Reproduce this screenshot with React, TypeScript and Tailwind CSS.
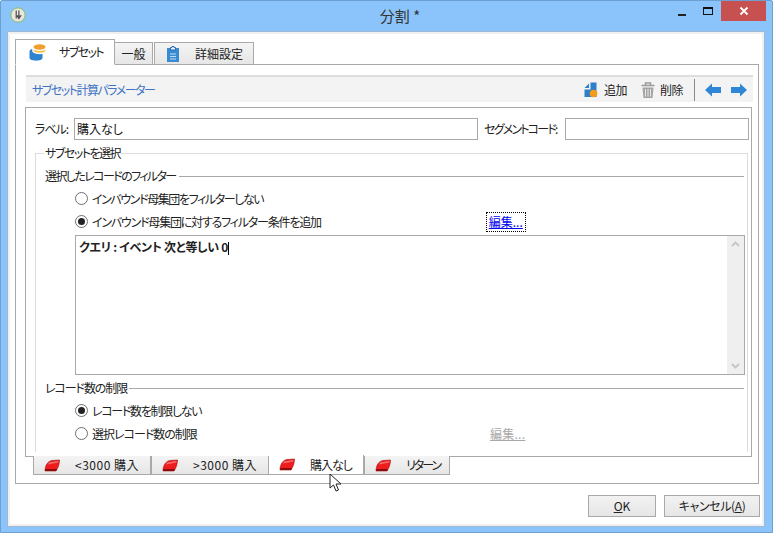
import type { ReactNode } from 'react';

const palt = "[font-feature-settings:'palt']";

function Radio({ checked, tracking, children }: { checked?: boolean; tracking: string; children: ReactNode }) {
    return (
        <div className="flex items-center gap-[4px] h-[23px]">
            <span className="w-[13px] h-[13px] rounded-full border border-[#707070] bg-white flex items-center justify-center">
                {checked && <span className="w-[7px] h-[7px] rounded-full bg-[#222]" />}
            </span>
            <span className={`${tracking} whitespace-nowrap`}>{children}</span>
        </div>
    );
}

function RedIcon() {
    return (
        <svg width="16" height="13" viewBox="0 0 16 13" className="shrink-0">
            <path d="M1 12 C1 7 3.5 2 8 1.5 L15.5 1 C15.5 5 14 9 12 12 Z" fill="#ee1c1c" stroke="#a01010" strokeWidth="0.6" />
            <path d="M1 12 L12 12 L13 10 L1.4 10 Z" fill="#8e0b0b" />
            <path d="M5 3.5 L14.5 2 L14.5 3.5 L4 5.5 Z" fill="#f76a6a" />
        </svg>
    );
}

function BottomTab({ label, active, width, tracking }: { label: string; active?: boolean; width: string; tracking: string }) {
    return (
        <div
            className={`${width} pl-[10px] flex items-center border-[#a9a9a9] border-r ${
                active
                    ? 'h-[20px] -mt-px bg-white border-b'
                    : 'h-[19px] border-l border-b bg-gradient-to-b from-[#f4f4f4] to-[#e6e6e6]'
            }`}
        >
            <RedIcon />
            <span className={`ml-[15px] whitespace-nowrap ${tracking}`}>{label}</span>
        </div>
    );
}

export default function App() {
    return (
        <div className={`w-[773px] h-[545px] bg-white text-[12px] leading-none text-[#222] overflow-hidden relative font-['Noto_Sans_CJK_JP','Noto_Sans',sans-serif] ${palt}`}>
            <div className="h-[533px] bg-[#8ac4fa] border border-[#6d9fd0] flex flex-col rounded-t-[2px]">
                {/* title bar */}
                <div className="h-[30px] flex items-start shrink-0">
                    <svg width="16" height="16" viewBox="0 0 18 18" className="ml-[9px] mt-[6px] shrink-0">
                        <circle cx="9" cy="9" r="8" fill="#e8e8e0" stroke="#8fb84a" strokeWidth="1" />
                        <path d="M7 4 L7 13 M10 4 L10 10 M8 10 L12 10 L10 13 Z" stroke="#555" strokeWidth="1.4" fill="#555" />
                    </svg>
                    <div className="flex-1 text-center text-[15px] text-[#333] pt-[7px] pl-[106px]">分割 *</div>
                    <div className="flex items-start pr-[6px]">
                        <div className="w-[27px] h-[20px] flex items-end justify-center pb-[5px]">
                            <span className="w-[8px] h-[2px] bg-[#222]" />
                        </div>
                        <div className="w-[26px] h-[20px] flex items-center justify-center">
                            <span className="w-[10px] h-[8px] border border-t-2 border-[#111]" />
                        </div>
                        <div className="w-[45px] h-[20px] bg-[#c75050] flex items-center justify-center">
                            <svg width="10" height="10" viewBox="0 0 10 10">
                                <path d="M1.5 1.5 L8.5 8.5 M8.5 1.5 L1.5 8.5" stroke="#fff" strokeWidth="1.8" />
                            </svg>
                        </div>
                    </div>
                </div>

                {/* client */}
                <div className="ml-[6px] mr-[7px] h-[496px] border border-[#9db9d6] bg-white shadow-[inset_0_0_0_2px_#f0f0f0] p-[7px_5px_0_7px] flex flex-col">
                    {/* top tabs */}
                    <div className="flex items-end h-[26px] relative z-10 -mb-px">
                        <div className="w-[100px] h-[26px] bg-white border border-[#a9a9a9] border-b-white flex items-center">
                            <svg width="17" height="17" viewBox="0 0 17 17" className="ml-[13px]">
                                <ellipse cx="10.5" cy="3" rx="6" ry="2.8" fill="#f0a030" />
                                <path d="M4.5 5 V6.5 C4.5 9.5 16.5 9.5 16.5 6.5 V5 C16.5 7.5 4.5 7.5 4.5 5 Z" fill="#f7c04a" />
                                <path d="M0.5 7.5 C0.5 6 2 5 3.2 5 V7 C3.5 9.5 9 10.5 13.5 10 V14 C13.5 17.5 0.5 17.5 0.5 14 Z" fill="#2d83d0" />
                            </svg>
                            <span className="ml-[13px] tracking-[-1.6px]">サブセット</span>
                        </div>
                        <div className="w-[38px] h-[23px] bg-gradient-to-b from-[#f4f4f4] to-[#e6e6e6] border border-l-0 border-[#a9a9a9] flex items-center justify-center">一般</div>
                        <div className="w-[100px] h-[23px] ml-px bg-gradient-to-b from-[#f4f4f4] to-[#e6e6e6] border border-[#a9a9a9] flex items-center">
                            <svg width="12" height="16" viewBox="0 0 12 16" className="ml-[12px]">
                                <rect x="0" y="2" width="12" height="14" fill="#3a8ad2" />
                                <path d="M3.5 4 V1.5 H5 V0.5 H7 V1.5 H8.5 V4 Z" fill="#e8f0f8" stroke="#2a6fb0" strokeWidth="1" />
                                <path d="M3 8 H9 M3 10.5 H9 M3 13 H9" stroke="#bcdcf5" strokeWidth="1" />
                            </svg>
                            <span className="ml-[16px]">詳細設定</span>
                        </div>
                    </div>

                    {/* frame */}
                    <div className="w-[744px] h-[420px] border border-[#a9a9a9] bg-white px-[10px] pt-[10px] flex flex-col">
                        {/* header band */}
                        <div className="h-[27px] w-[727px] bg-[#f3f3f3] border-t-2 border-[#dedede] flex items-center pl-[6px] pr-[6px] text-[#3d72c4]">
                            <span className="tracking-[-1.5px]">サブセット計算パラメーター</span>
                            <div className="ml-auto flex items-center text-[#222]">
                                <svg width="14" height="16" viewBox="0 0 14 16">
                                    <path d="M0.5 6 L5 1.5 L5 6 Z M6.5 0.5 H12.5 V15 H0.5 V7.5 H6.5 Z" fill="#2d7fc9" />
                                    <circle cx="9.5" cy="11.5" r="3.8" fill="#f59a1b" />
                                </svg>
                                <span className="ml-[6px] tracking-[-0.5px]">追加</span>
                                <svg width="14" height="16" viewBox="0 0 14 16" className="ml-[14px]">
                                    <path d="M0.5 3.5 H13.5 M4.5 3 V1 H9.5 V3" stroke="#9a9a9a" strokeWidth="1.5" fill="none" />
                                    <path d="M1.5 5.5 H12.5 L11.5 16 H2.5 Z" fill="#a4a4a4" />
                                    <path d="M4.5 7 V14.5 M7 7 V14.5 M9.5 7 V14.5" stroke="#e8e8e8" strokeWidth="1" />
                                </svg>
                                <span className="ml-[5px] tracking-[-0.5px]">削除</span>
                                <span className="w-px h-[22px] bg-[#8a8a8a] ml-[11px] mr-[10px]" />
                                <svg width="16" height="14" viewBox="0 0 16 14">
                                    <path d="M0 7 L7 0.5 V4 H16 V10 H7 V13.5 Z" fill="#2f86d6" />
                                </svg>
                                <svg width="16" height="14" viewBox="0 0 16 14" className="ml-[10px]">
                                    <path d="M16 7 L9 0.5 V4 H0 V10 H9 V13.5 Z" fill="#2f86d6" />
                                </svg>
                            </div>
                        </div>

                        {/* inner panel */}
                        <div className="w-[727px] h-[350px] -ml-px mt-[5px] border border-[#a9a9a9] pl-[9px] bg-white relative">
                            <div className="flex items-center h-[22px] mt-[10px]">
                                <span className="w-[39px] tracking-[-1px] whitespace-nowrap">ラベル:</span>
                                <div className="w-[404px] h-[22px] border border-[#a9a9a9] pl-[2px] flex items-center text-[#111]">購入なし</div>
                                <span className="ml-[6px] w-[81px] tracking-[-1.8px] whitespace-nowrap">セグメントコード:</span>
                                <div className="w-[184px] h-[22px] border border-[#a9a9a9]" />
                            </div>

                            {/* fieldset */}
                            <div className="w-[713px] h-[299px] mt-[13px] border-l border-t border-r border-[#dcdcdc] pl-[9px] pr-[3px] relative">
                                <span className="absolute -top-[7px] left-[8px] bg-white px-px tracking-[-1.5px]">サブセットを選択</span>
                                <div className="flex items-center h-[14px] mt-[15px]">
                                    <span className="tracking-[-1.6px]">選択したレコードのフィルター</span>
                                    <span className="flex-1 h-px bg-[#a9a9a9] ml-[3px]" />
                                </div>
                                <div className="ml-[30px] mt-[4px]">
                                    <Radio tracking="tracking-[-1.4px]">インバウンド母集団をフィルターしない</Radio>
                                    <div className="flex items-center">
                                        <Radio checked tracking="tracking-[-1.2px]">インバウンド母集団に対するフィルター条件を追加</Radio>
                                        <div className="ml-[165px] w-[40px] h-[20px] border border-dotted border-black flex items-center justify-center text-[#0000ee] underline">編集...</div>
                                    </div>
                                </div>
                                <div className="ml-[30px] w-[670px] h-[140px] mt-[2px] border border-[#a9a9a9] flex">
                                    <div className="flex-1 pl-[3px] pt-[5px] font-bold text-[#222] tracking-[-0.3px]">
                                        クエリ : イベント 次と等しい 0<span className="inline-block w-px h-[13px] bg-black align-middle" />
                                    </div>
                                    <div className="w-[17px] bg-[#efefef] flex flex-col justify-between items-center py-[5px]">
                                        <svg width="9" height="6" viewBox="0 0 9 6">
                                            <path d="M1 5 L4.5 1.5 L8 5" stroke="#c4c4c4" strokeWidth="1.8" fill="none" />
                                        </svg>
                                        <svg width="9" height="6" viewBox="0 0 9 6">
                                            <path d="M1 1 L4.5 4.5 L8 1" stroke="#c4c4c4" strokeWidth="1.8" fill="none" />
                                        </svg>
                                    </div>
                                </div>
                                <div className="flex items-center h-[14px] mt-[6px]">
                                    <span className="tracking-[-1.1px]">レコード数の制限</span>
                                    <span className="flex-1 h-px bg-[#a9a9a9] ml-[2px]" />
                                </div>
                                <div className="ml-[30px] mt-[4px]">
                                    <Radio checked tracking="tracking-[-1.3px]">レコード数を制限しない</Radio>
                                    <div className="flex items-center">
                                        <Radio tracking="tracking-[-1px]">選択レコード数の制限</Radio>
                                        <span className="ml-[293px] text-[#a8a8a8] underline tracking-[0.3px]">編集...</span>
                                    </div>
                                </div>
                            </div>
                        </div>

                        {/* bottom tabs */}
                        <div className="flex ml-[7px] -mt-px relative">
                            <BottomTab label="<3000 購入" width="w-[118px]" tracking="tracking-[0.5px]" />
                            <BottomTab label=">3000 購入" width="w-[118px]" tracking="tracking-[0.5px]" />
                            <BottomTab label="購入なし" active width="w-[95px]" tracking="tracking-[-1px]" />
                            <BottomTab label="リターン" width="w-[86px]" tracking="tracking-[-2px]" />
                        </div>
                    </div>

                    {/* buttons */}
                    <div className="flex justify-end gap-[8px] mt-[11px] -mr-px">
                        <div className="w-[68px] h-[22px] border border-[#a9a9a9] bg-gradient-to-b from-[#f2f2f2] to-[#e6e6e6] flex items-center justify-center"><span><u>O</u>K</span></div>
                        <div className="w-[96px] h-[22px] border border-[#a9a9a9] bg-gradient-to-b from-[#f2f2f2] to-[#e6e6e6] flex items-center justify-center"><span className="tracking-[-0.4px]">キャンセル(<u>A</u>)</span></div>
                    </div>
                </div>
            </div>

            {/* mouse pointer */}
            <svg width="14" height="20" viewBox="0 0 14 20" className="absolute left-[329px] top-[473px]">
                <path d="M1 1 L1 15 L4.5 12 L7 18 L9.5 17 L7 11 L12 11 Z" fill="#fff" stroke="#222" strokeWidth="1" />
            </svg>
        </div>
    );
}
